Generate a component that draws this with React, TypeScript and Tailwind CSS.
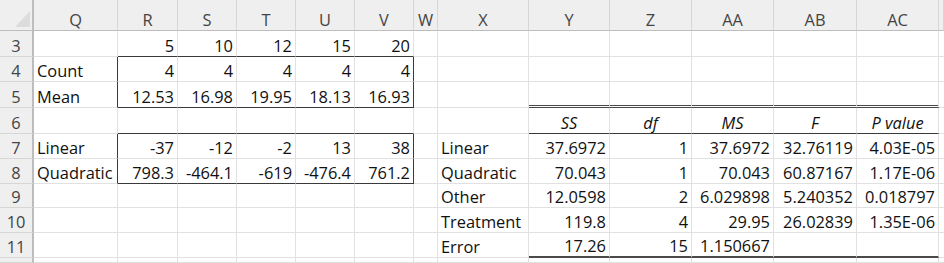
import React from "react";

type Cell = { t: string; a?: "l" | "r" | "c"; i?: boolean };

const colLetters = ["Q", "R", "S", "T", "U", "V", "W", "X", "Y", "Z", "AA", "AB", "AC", ""];

const rowNums = [3, 4, 5, 6, 7, 8, 9, 10, 11, 12];

const data: Record<number, Record<number, Cell>> = {
  3: { 1: { t: "5" }, 2: { t: "10" }, 3: { t: "12" }, 4: { t: "15" }, 5: { t: "20" } },
  4: { 0: { t: "Count", a: "l" }, 1: { t: "4" }, 2: { t: "4" }, 3: { t: "4" }, 4: { t: "4" }, 5: { t: "4" } },
  5: { 0: { t: "Mean", a: "l" }, 1: { t: "12.53" }, 2: { t: "16.98" }, 3: { t: "19.95" }, 4: { t: "18.13" }, 5: { t: "16.93" } },
  6: {
    8: { t: "SS", a: "c", i: true },
    9: { t: "df", a: "c", i: true },
    10: { t: "MS", a: "c", i: true },
    11: { t: "F", a: "c", i: true },
    12: { t: "P value", a: "c", i: true },
  },
  7: {
    0: { t: "Linear", a: "l" }, 1: { t: "-37" }, 2: { t: "-12" }, 3: { t: "-2" }, 4: { t: "13" }, 5: { t: "38" },
    7: { t: "Linear", a: "l" }, 8: { t: "37.6972" }, 9: { t: "1" }, 10: { t: "37.6972" }, 11: { t: "32.76119" }, 12: { t: "4.03E-05" },
  },
  8: {
    0: { t: "Quadratic", a: "l" }, 1: { t: "798.3" }, 2: { t: "-464.1" }, 3: { t: "-619" }, 4: { t: "-476.4" }, 5: { t: "761.2" },
    7: { t: "Quadratic", a: "l" }, 8: { t: "70.043" }, 9: { t: "1" }, 10: { t: "70.043" }, 11: { t: "60.87167" }, 12: { t: "1.17E-06" },
  },
  9: { 7: { t: "Other", a: "l" }, 8: { t: "12.0598" }, 9: { t: "2" }, 10: { t: "6.029898" }, 11: { t: "5.240352" }, 12: { t: "0.018797" } },
  10: { 7: { t: "Treatment", a: "l" }, 8: { t: "119.8" }, 9: { t: "4" }, 10: { t: "29.95" }, 11: { t: "26.02839" }, 12: { t: "1.35E-06" } },
  11: { 7: { t: "Error", a: "l" }, 8: { t: "17.26" }, 9: { t: "15" }, 10: { t: "1.150667" } },
};

function rightDark(r: number, c: number) {
  return (c === 0 || c === 5) && (r === 4 || r === 5 || r === 7 || r === 8);
}

function bottomKind(r: number, c: number): "grid" | "dark" | "double" | "thick" {
  if (c >= 1 && c <= 5 && (r === 3 || r === 5 || r === 6 || r === 8)) return "dark";
  if (c >= 8 && c <= 12) {
    if (r === 5) return "double";
    if (r === 6) return "dark";
    if (r === 11) return "thick";
  }
  return "grid";
}

function DataCell({ r, c }: { r: number; c: number }) {
  const cell = data[r]?.[c];
  const rd = rightDark(r, c);
  const bk = bottomKind(r, c);
  const rightCls = rd ? "border-r border-r-[#3a3a3a]" : "border-r border-r-[#e1e1e1]";
  let bottomCls = "border-b border-b-[#e1e1e1]";
  if (bk === "dark") bottomCls = "border-b border-b-[#3a3a3a]";
  if (bk === "double") bottomCls = "border-b-[3px] border-double border-b-[#4a4a4a]";
  if (bk === "thick") bottomCls = "border-b-2 border-b-[#4a4a4a]";
  let just = "justify-end";
  if (cell?.a === "l") just = "justify-start";
  if (cell?.a === "c") just = "justify-center";
  return (
    <div className={`flex items-end overflow-hidden whitespace-nowrap bg-white px-[3px] ${just} ${rightCls} ${bottomCls}`}>
      {cell ? (
        <span className={`leading-[20px] text-[#111] ${cell.i ? "italic" : ""}`}>{cell.t}</span>
      ) : null}
    </div>
  );
}

export default function App() {
  return (
    <div className="w-[944px] h-[263px] overflow-hidden bg-white font-['Open_Sans',sans-serif] text-[16.4px]">
      <div className="grid grid-cols-[34px_84px_60px_59px_59px_59px_59px_24px_91px_81px_82px_82px_83px_82px_5px] grid-rows-[31px_26px_25px_26px_26px_25px_25px_24px_25px_25px_5px]">
        {/* corner */}
        <div className="relative bg-[#efefef] border-r-2 border-r-[#bdbdbd] border-b border-b-[#bdbdbd]">
          <svg className="absolute left-0 top-0" width="32" height="30" viewBox="0 0 32 30">
            <polygon points="15,27 30,27 30,11" fill="#dcdcdc" />
          </svg>
        </div>
        {colLetters.map((l, i) => (
          <div
            key={`h${i}`}
            className="flex items-end justify-center overflow-hidden bg-[#efefef] border-r border-r-[#d6d6d6] border-b border-b-[#bdbdbd]"
          >
            <span className="leading-[20px] text-[#444]">{l}</span>
          </div>
        ))}
        {rowNums.map((r) => (
          <React.Fragment key={`r${r}`}>
            <div className="flex items-end justify-center overflow-hidden bg-[#efefef] border-r-2 border-r-[#bdbdbd] border-b border-b-[#d6d6d6]">
              {r < 12 ? <span className="leading-[20px] text-[#444]">{r}</span> : null}
            </div>
            {colLetters.map((_, c) => (
              <DataCell key={`c${r}-${c}`} r={r} c={c} />
            ))}
          </React.Fragment>
        ))}
      </div>
    </div>
  );
}
